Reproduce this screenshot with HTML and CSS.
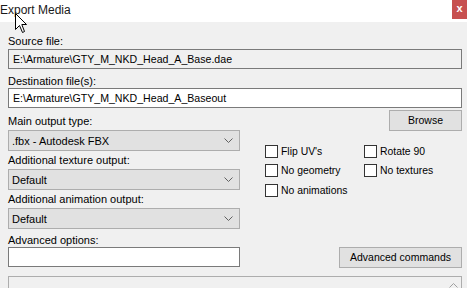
FILE: index.html
```html
<!DOCTYPE html>
<html>
<head>
<meta charset="utf-8">
<link rel="stylesheet" href="styles.css">
</head>
<body>
<div class="window">
  <div class="titlebar">
    <span class="title">Export Media</span>
    <span class="close">x</span>
  </div>
  <div class="content">
    <div class="label first">Source file:</div>
    <div class="textbox readonly">E:\Armature\GTY_M_NKD_Head_A_Base.dae</div>
    <div class="label dest">Destination file(s):</div>
    <div class="textbox">E:\Armature\GTY_M_NKD_Head_A_Baseout</div>
    <div class="lower">
      <div class="left">
        <div class="label l1">Main output type:</div>
        <div class="select"><span>.fbx - Autodesk FBX</span><svg class="chev" width="9" height="5" viewBox="0 0 9 5"><path d="M0.5 0.5 L4.5 4.5 L8.5 0.5" fill="none" stroke="#606060" stroke-width="1"/></svg></div>
        <div class="label">Additional texture output:</div>
        <div class="select"><span>Default</span><svg class="chev" width="9" height="5" viewBox="0 0 9 5"><path d="M0.5 0.5 L4.5 4.5 L8.5 0.5" fill="none" stroke="#606060" stroke-width="1"/></svg></div>
        <div class="label">Additional animation output:</div>
        <div class="select"><span>Default</span><svg class="chev" width="9" height="5" viewBox="0 0 9 5"><path d="M0.5 0.5 L4.5 4.5 L8.5 0.5" fill="none" stroke="#606060" stroke-width="1"/></svg></div>
        <div class="label adv">Advanced options:</div>
        <div class="textbox"></div>
      </div>
      <div class="right">
        <div class="btnrow top"><div class="button browse">Browse</div></div>
        <div class="checks">
          <label class="check"><span class="box"></span>Flip UV's</label>
          <label class="check"><span class="box"></span>Rotate 90</label>
          <label class="check"><span class="box"></span>No geometry</label>
          <label class="check"><span class="box"></span>No textures</label>
          <label class="check"><span class="box"></span>No animations</label>
        </div>
        <div class="btnrow bottom"><div class="button advcmd">Advanced commands</div></div>
      </div>
    </div>
    <div class="output">
      <div class="scroll"><svg width="9" height="5" viewBox="0 0 9 5"><path d="M0.5 4.5 L4.5 0.5 L8.5 4.5" fill="none" stroke="#a0a0a0" stroke-width="1"/></svg></div>
    </div>
  </div>
  <svg class="cursor" width="13" height="21" viewBox="0 0 13 21"><path d="M0.5 0.5 L0.5 16.5 L4.5 12.5 L7.5 19.5 L9.5 18.5 L6.8 11.5 L11.5 11.5 Z" fill="#fff" stroke="#000" stroke-width="1" stroke-linejoin="miter"/></svg>
</div>
</body>
</html>
```
FILE: styles.css
```css
* { box-sizing: border-box; }
html, body { margin: 0; padding: 0; }
body {
  width: 467px;
  height: 288px;
  overflow: hidden;
  background: #f0f0f0;
  font-family: "Liberation Sans", Arial, sans-serif;
  font-size: 11px;
  color: #000;
}
.window { position: relative; width: 467px; height: 288px; overflow: hidden; }
.titlebar {
  height: 22px;
  background: #fff;
  display: flex;
  justify-content: space-between;
  align-items: flex-start;
}
.title {
  font-size: 12px;
  line-height: 21px;
  color: #1a1a1a;
}
.close {
  width: 15px;
  height: 19px;
  background: #c75050;
  color: #fff;
  font-weight: bold;
  font-size: 11px;
  line-height: 17px;
  text-align: center;
}
.content {
  padding: 12px 5px 0 8px;
  width: 467px;
}
.label {
  height: 14px;
  line-height: 14px;
  white-space: nowrap;
}
.label.first { margin-bottom: 1px; }
.label.dest { margin-top: 5px; }
.textbox {
  height: 20px;
  border: 1px solid #7a7a7a;
  background: #fff;
  line-height: 18px;
  padding-left: 4px;
  font-size: 10.6px;
  white-space: nowrap;
}
.textbox.readonly { background: #f0f0f0; }
.lower {
  display: grid;
  grid-template-columns: 232px 1fr;
}
.left { display: flex; flex-direction: column; }
.left .label { margin-top: 2px; }
.left .label.l1 { margin-top: 6px; }
.select {
  margin-top: 2px;
  height: 21px;
  background: #e1e1e1;
  border: 1px solid #adadad;
  display: flex;
  align-items: center;
  justify-content: space-between;
  padding: 0 6px 0 3px;
}
.left .label.adv { margin-top: 4px; }
.right { display: flex; flex-direction: column; }
.btnrow { display: flex; justify-content: flex-end; }
.btnrow.top { margin-top: 2px; }
.button {
  height: 21px;
  background: #e1e1e1;
  border: 1px solid #adadad;
  text-align: center;
  line-height: 19px;
  font-size: 10.5px;
}
.browse { width: 73px; }
.checks {
  margin-top: 14px;
  margin-left: 25px;
  display: grid;
  grid-template-columns: 99px 1fr;
  grid-template-rows: 19px 20px 13px;
  font-size: 10.4px;
}
.check {
  display: flex;
  align-items: center;
  height: 13px;
  line-height: 13px;
}
.box {
  width: 13px;
  height: 13px;
  border: 1px solid #333;
  background: #fff;
  margin-right: 3px;
  flex: none;
}
.btnrow.bottom { margin-top: 50px; }
.advcmd { width: 123px; }
.output {
  margin-top: 8px;
  height: 30px;
  border: 1px solid #adadad;
  background: #f0f0f0;
  display: flex;
  justify-content: flex-end;
}
.scroll {
  width: 16px;
  display: flex;
  justify-content: center;
  padding-top: 6px;
}
.scroll svg { display: block; }
.cursor { position: absolute; left: 15px; top: 13px; }
```
